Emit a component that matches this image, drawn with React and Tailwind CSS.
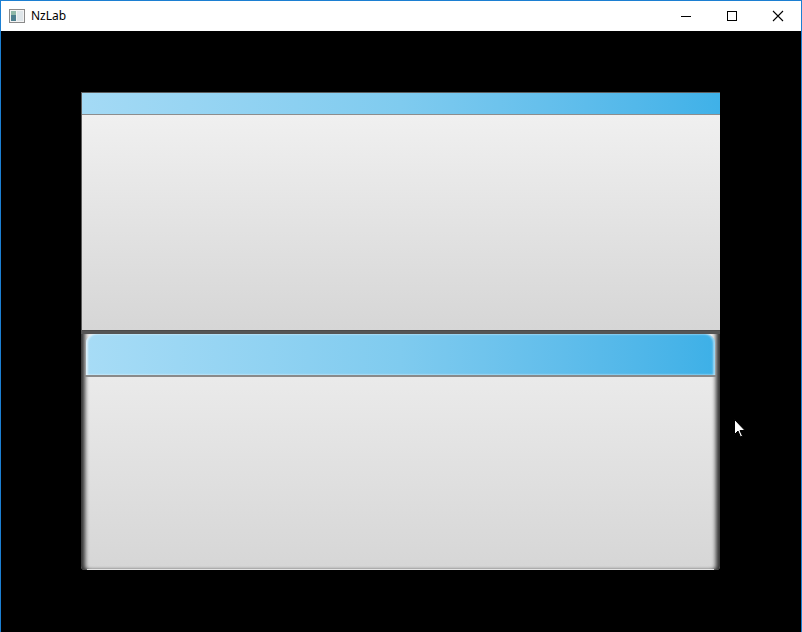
import React from 'react';

const TitleBar = () => {
  return (
    <div className="h-[30px] bg-white flex items-center relative" style={{ fontFamily: '"Segoe UI", "Noto Sans", "Liberation Sans", sans-serif' }}>
      {/* app icon */}
      <svg width="16" height="14" viewBox="0 0 16 14" className="ml-[8px]">
        <rect x="0.5" y="0.5" width="15" height="13" fill="#f4f4f4" stroke="#8a8a8a" />
        <rect x="2" y="2" width="5" height="10" fill="#4d7f8f" />
        <rect x="2" y="2" width="5" height="4" fill="#8fb8a8" />
        <rect x="8" y="2" width="6" height="10" fill="#dfe6ea" />
      </svg>
      <span className="ml-[6px] text-[12px] text-black leading-none">NzLab</span>
      <div className="ml-auto flex h-full">
        <div className="w-[46px] h-full flex items-center justify-center">
          <div className="w-[10px] h-px bg-black" />
        </div>
        <div className="w-[46px] h-full flex items-center justify-center">
          <div className="w-[10px] h-[10px] border border-black" />
        </div>
        <div className="w-[46px] h-full flex items-center justify-center">
          <svg width="12" height="12" viewBox="0 0 12 12">
            <path d="M1 1 L11 11 M11 1 L1 11" stroke="#000" strokeWidth="1.1" />
          </svg>
        </div>
      </div>
    </div>
  );
};

const App = () => {
  return (
    <div className="w-[802px] h-[632px] bg-black border-x border-t border-[#1c7fd2] flex flex-col overflow-hidden relative">
      <TitleBar />
      <div className="flex-1 pl-[80px] pt-[61px]">
        <div className="w-[639px] flex flex-col">
          {/* upper panel */}
          <div className="h-[239px] flex flex-col border-t border-l border-[#5c5c5c]">
            <div className="h-[21px] bg-gradient-to-r from-[#a4daf5] via-[#7fcbef] to-[#3fb1e8]" />
            <div className="h-px bg-[#8d8d8d]" />
            <div className="flex-1 bg-gradient-to-b from-[#f0f0f0] to-[#d6d6d6]" />
            <div className="h-px bg-[#4a4a4a]" />
          </div>
          {/* lower panel */}
          <div className="h-[239px] relative bg-gradient-to-b from-[#efefef] to-[#d6d6d6] flex flex-col shadow-[inset_5px_0_4px_-1px_rgba(40,40,40,0.95),inset_-5px_0_4px_-1px_rgba(40,40,40,0.95)] rounded-b-[4px]">
            <div className="h-[3px] bg-[#555]" />
            <div className="mx-[5px] h-[41px] rounded-t-[9px] bg-gradient-to-r from-[#a7dcf6] via-[#7fcbef] to-[#3db0e7] shadow-[inset_2px_0_2px_rgba(255,255,255,0.6),inset_-2px_0_2px_rgba(255,255,255,0.5)]" />
            <div className="mx-[4px] h-[2px] bg-[#8a8a8a]" />
            <div className="flex-1" />
            <div className="h-px mx-[6px] bg-[#e4e4e4]" />
          </div>
        </div>
      </div>
      {/* mouse cursor */}
      <svg width="12" height="19" viewBox="0 0 12 19" className="absolute left-[733px] top-[418px]">
        <path d="M0.5 0.5 L0.5 15.5 L4 12 L6.5 18 L8.5 17 L6 11.5 L11 11.5 Z" fill="#fff" stroke="#000" strokeWidth="1" />
      </svg>
    </div>
  );
};

export default App;
